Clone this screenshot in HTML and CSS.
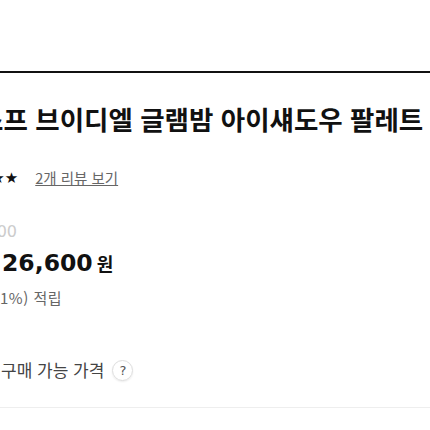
FILE: index.html
```html
<!DOCTYPE html>
<html lang="ko">
<head>
  <meta charset="UTF-8">
  <title>상품 상세</title>
  <link rel="stylesheet" href="styles.css">
</head>
<body>

<div class="top-area"></div>

<div class="product-info">
  <h1 class="product-title">[VDL] 스프 브이디엘 글램밤 아이섀도우 팔레트</h1>

  <div class="rating-row">
    <span class="stars">★★★★★</span>
    <a href="#" class="review-link">2개 리뷰 보기</a>
  </div>

  <div class="orig-price">38,000</div>

  <div class="price-row">
    <span class="discount">30%</span>
    <span class="price">26,600</span>
    <span class="won">원</span>
  </div>

  <div class="point-row">266원 (1%) 적립</div>

  <div class="buy-row">
    <span class="buy-label">최대 구매 가능 가격</span>
    <span class="help">?</span>
  </div>
</div>

</body>
</html>
```

FILE: styles.css
```css
body {
  font-family: "Noto Sans CJK KR", "Noto Sans", sans-serif;
  background-color: #fff;
  margin: 0;
  overflow: hidden;
  color: #111;
}
.top-area {
  height: 71px;
  border-bottom: 2px solid #111;
}
.product-info {
  margin-left: -100px;
  white-space: nowrap;
}
.product-title {
  margin: 28px 0 0 1px;
  font-size: 26.5px;
  line-height: 36px;
  font-weight: bold;
  color: #111;
}
.rating-row {
  margin-top: 31px;
  line-height: 20px;
  display: flex;
  align-items: center;
  gap: 17px;
  padding-left: 51px;
}
.stars {
  font-family: "DejaVu Sans", sans-serif;
  font-size: 15px;
  color: #111;
}
.review-link {
  font-size: 14.5px;
  color: #666;
}
.orig-price {
  margin-top: 33px;
  line-height: 22px;
  font-family: "DejaVu Sans", sans-serif;
  font-size: 16px;
  color: #ccc;
  padding-left: 61px;
}
.price-row {
  margin-top: 6px;
  height: 32px;
  display: flex;
  align-items: baseline;
  padding-left: 42px;
}
.discount {
  font-family: "DejaVu Sans", sans-serif;
  font-weight: bold;
  font-size: 23.5px;
  color: #e4423c;
  width: 60px;
}
.price {
  font-family: "DejaVu Sans", sans-serif;
  font-weight: bold;
  font-size: 23.5px;
  color: #111;
}
.won {
  font-size: 18px;
  font-weight: bold;
  margin-left: 4px;
}
.point-row {
  margin-top: 7px;
  line-height: 20px;
  font-size: 15px;
  letter-spacing: 0.5px;
  color: #666;
  padding-left: 49px;
}
.buy-row {
  margin-top: 51px;
  padding-bottom: 26px;
  border-bottom: 1px solid #eee;
  display: flex;
  align-items: center;
  padding-left: 65px;
}
.buy-label {
  font-size: 17px;
  line-height: 22px;
  color: #444;
}
.help {
  width: 21px;
  height: 21px;
  margin-left: 8px;
  border: 1px solid #ddd;
  border-radius: 50%;
  box-sizing: border-box;
  display: flex;
  align-items: center;
  justify-content: center;
  font-family: "DejaVu Sans", sans-serif;
  font-size: 13px;
  color: #555;
  box-shadow: 0 1px 2px rgba(0,0,0,0.08);
}
```
